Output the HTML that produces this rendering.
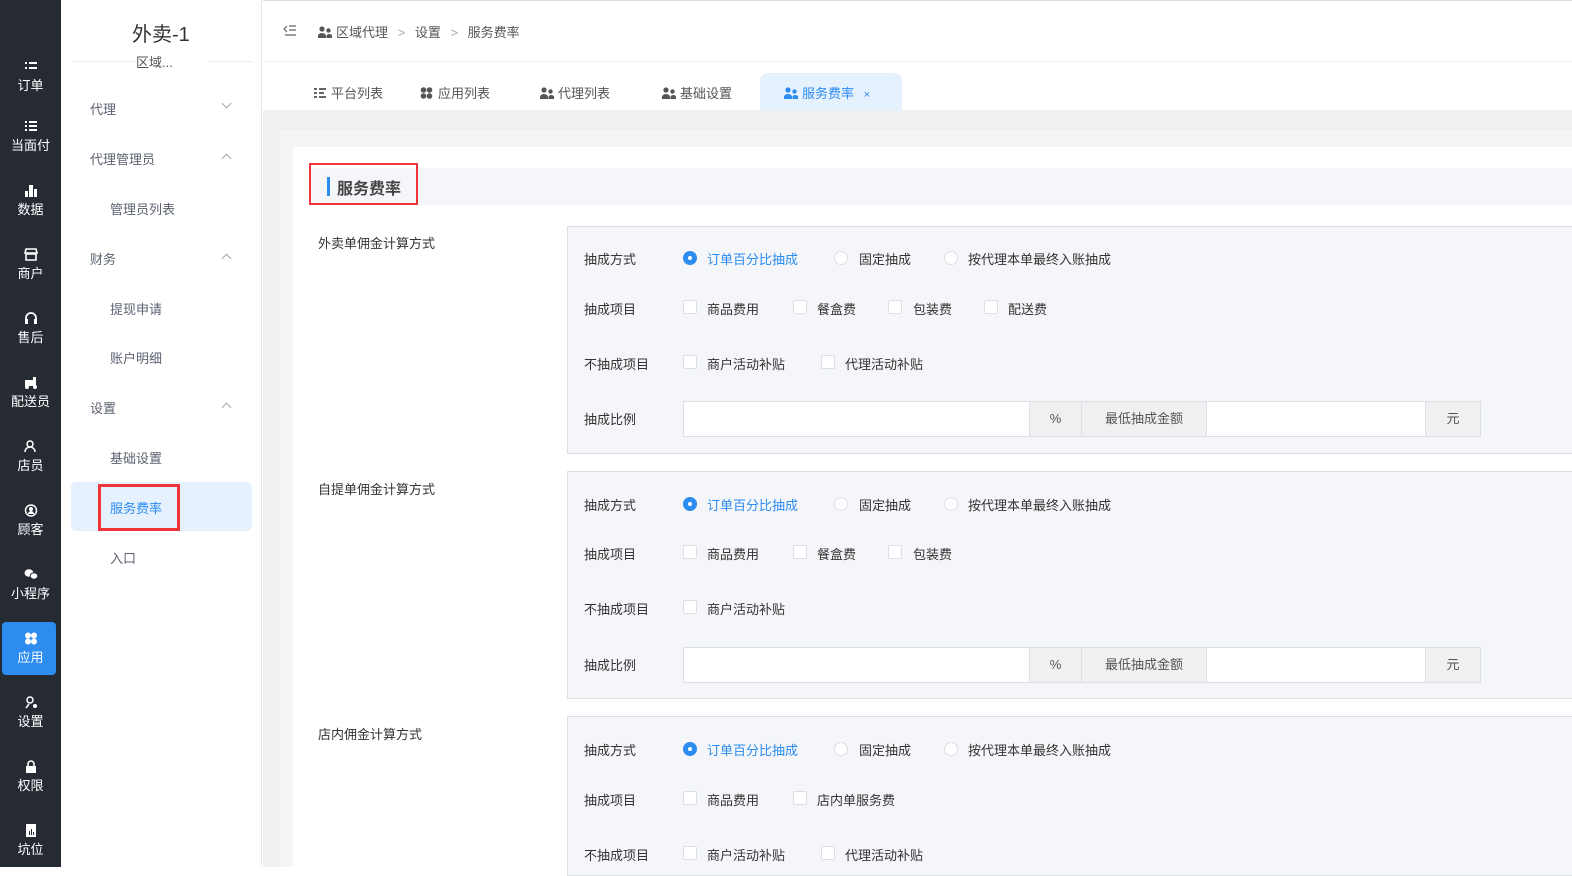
<!DOCTYPE html>
<html><head><meta charset="utf-8"><style>
*{margin:0;padding:0;box-sizing:border-box}
body{width:1572px;height:867px;overflow:hidden;position:relative;background:#fff;font-family:"Liberation Sans","Noto Sans CJK SC",sans-serif;font-size:13px;color:#333}
.a{position:absolute;white-space:nowrap}
.nav{position:absolute;left:0;top:0;width:61px;height:867px;background:#262a33}
.ni{position:absolute;left:0;width:61px;text-align:center;color:#fff;font-size:13px}
.ni .ic{display:block;margin:0 auto 2px;width:14px;height:13px}
.sub{position:absolute;left:61px;top:0;width:201px;height:867px;background:#fff;border-right:1px solid #e6e6e6}
.si{position:absolute;font-size:13px;color:#5c6270}
.chev{position:absolute;left:222px;width:7px;height:7px;border-left:1px solid #a0a4ad;border-top:1px solid #a0a4ad}
.panel{position:absolute;left:567px;width:1010px;background:#f5f6f9;border:1px solid #dcdfe6}
.radio{position:absolute;width:14px;height:14px;border-radius:50%;border:1px solid #dcdfe6;background:#fff}
.radio.on{background:#2d8cf0;border-color:#2d8cf0}
.radio.on::after{content:"";position:absolute;left:4px;top:4px;width:4px;height:4px;border-radius:50%;background:#fff}
.cb{position:absolute;width:14px;height:14px;border:1px solid #dcdfe6;background:#fff;border-radius:2px}
.lbl{position:absolute;font-size:13px;color:#333;white-space:nowrap}
.inp{position:absolute;height:36px;border:1px solid #dcdfe6;background:#fff}
.add{position:absolute;height:36px;background:#f0f0f0;border:1px solid #dcdfe6;font-size:13px;color:#555;text-align:center;line-height:34px}
.pp{display:inline-block;width:14px;height:12px;vertical-align:-1px;margin-right:4px}
</style></head><body>
<svg width="0" height="0" style="position:absolute"><defs><symbol id="pp" viewBox="0 0 14 12"><circle cx="4" cy="3" r="2.6"/><path d="M0 12v-2a4 3 0 0 1 8 0v2z"/><circle cx="10.5" cy="4.5" r="2.2"/><path d="M8.5 12v-2.5a3 2.5 0 0 1 5.5 0V12z"/></symbol></defs></svg>

<div class="nav">
<div class="ni" style="top:60px"><svg class="ic" viewBox="0 0 14 13"><rect x="1" y="2" width="2" height="2" fill="#fff"/><rect x="5" y="2" width="8" height="2" fill="#fff"/><rect x="1" y="7" width="2" height="2" fill="#fff"/><rect x="5" y="7" width="8" height="2" fill="#fff"/></svg>订单</div>
<div class="ni" style="top:120px"><svg class="ic" viewBox="0 0 14 13"><rect x="1" y="1" width="2" height="2" fill="#fff"/><rect x="5" y="1" width="8" height="2" fill="#fff"/><rect x="1" y="5" width="2" height="2" fill="#fff"/><rect x="5" y="5" width="8" height="2" fill="#fff"/><rect x="1" y="9" width="2" height="2" fill="#fff"/><rect x="5" y="9" width="8" height="2" fill="#fff"/></svg>当面付</div>
<div class="ni" style="top:184px"><svg class="ic" viewBox="0 0 14 13"><rect x="1" y="7" width="3" height="6" fill="#fff"/><rect x="5" y="1" width="4" height="12" fill="#fff"/><rect x="10" y="5" width="3" height="8" fill="#fff"/></svg>数据</div>
<div class="ni" style="top:248px"><svg class="ic" viewBox="0 0 14 13"><path d="M2 1h10l1 4H1z M2 6h10v6H2z" fill="none" stroke="#fff" stroke-width="1.6"/></svg>商户</div>
<div class="ni" style="top:312px"><svg class="ic" viewBox="0 0 14 13"><path d="M2 9V6a5 5 0 0 1 10 0v3" fill="none" stroke="#fff" stroke-width="1.8"/><rect x="1" y="7" width="3" height="5" fill="#fff"/><rect x="10" y="7" width="3" height="5" fill="#fff"/></svg>售后</div>
<div class="ni" style="top:376px"><svg class="ic" viewBox="0 0 14 13"><rect x="1" y="4" width="8" height="6" fill="#fff"/><rect x="9" y="1" width="3" height="9" fill="#fff"/><circle cx="3" cy="11" r="2" fill="#fff"/><circle cx="11" cy="11" r="2" fill="#fff"/></svg>配送员</div>
<div class="ni" style="top:440px"><svg class="ic" viewBox="0 0 14 13"><circle cx="6" cy="4" r="3" fill="none" stroke="#fff" stroke-width="1.5"/><path d="M1 12a5 5 0 0 1 10 0" fill="none" stroke="#fff" stroke-width="1.5"/></svg>店员</div>
<div class="ni" style="top:504px"><svg class="ic" viewBox="0 0 14 13"><circle cx="7" cy="6.5" r="5.5" fill="none" stroke="#fff" stroke-width="1.5"/><circle cx="7" cy="5" r="2" fill="#fff"/><path d="M4 10a3 3 0 0 1 6 0" fill="#fff"/></svg>顾客</div>
<div class="ni" style="top:568px"><svg class="ic" viewBox="0 0 14 13"><ellipse cx="5" cy="5" rx="4.5" ry="3.8" fill="#fff"/><ellipse cx="10" cy="8" rx="3.8" ry="3.2" fill="#fff" stroke="#262a33"/></svg>小程序</div>
<div style="position:absolute;left:2px;top:622px;width:54px;height:53px;background:#2d8cf0;border-radius:4px"></div>
<div class="ni" style="top:632px"><svg class="ic" viewBox="0 0 14 13"><circle cx="4" cy="3.5" r="3" fill="#fff"/><circle cx="10" cy="3.5" r="3" fill="#fff"/><circle cx="4" cy="9.5" r="3" fill="#fff"/><circle cx="10" cy="9.5" r="3" fill="#fff"/></svg>应用</div>
<div class="ni" style="top:696px"><svg class="ic" viewBox="0 0 14 13"><circle cx="6" cy="4" r="3" fill="none" stroke="#fff" stroke-width="1.5"/><path d="M2 12l3-4" stroke="#fff" stroke-width="1.5"/><circle cx="11" cy="10" r="2" fill="#fff"/></svg>设置</div>
<div class="ni" style="top:760px"><svg class="ic" viewBox="0 0 14 13"><path d="M4 6V4a3 3 0 0 1 6 0v2" fill="none" stroke="#fff" stroke-width="1.6"/><rect x="2" y="6" width="10" height="7" fill="#fff"/></svg>权限</div>
<div class="ni" style="top:824px"><svg class="ic" viewBox="0 0 14 13"><rect x="2" y="0" width="10" height="13" fill="#fff"/><rect x="5" y="7" width="1" height="4" fill="#262a33"/><rect x="7" y="5" width="1" height="6" fill="#262a33"/><rect x="9" y="8" width="1" height="3" fill="#262a33"/></svg>坑位</div>
</div>

<div class="sub">
<div class="a" style="left:71px;top:18px;font-size:20px;color:#333">外卖-1</div>
<div class="a" style="left:10px;top:61px;width:71px;height:1px;background:#eee"></div>
<div class="a" style="left:146px;top:61px;width:46px;height:1px;background:#eee"></div>
<div class="a" style="left:75px;top:52px;font-size:13px;color:#555">区域...</div>
<div class="si" style="left:29px;top:99px">代理</div><div class="chev" style="top:100px;left:162px;transform:rotate(-135deg)"></div>
<div class="si" style="left:29px;top:149px">代理管理员</div><div class="chev" style="top:155px;left:162px;transform:rotate(45deg)"></div>
<div class="si" style="left:49px;top:199px">管理员列表</div>
<div class="si" style="left:29px;top:249px">财务</div><div class="chev" style="top:255px;left:162px;transform:rotate(45deg)"></div>
<div class="si" style="left:49px;top:299px">提现申请</div>
<div class="si" style="left:49px;top:348px">账户明细</div>
<div class="si" style="left:29px;top:398px">设置</div><div class="chev" style="top:404px;left:162px;transform:rotate(45deg)"></div>
<div class="si" style="left:49px;top:448px">基础设置</div>
<div class="a" style="left:10px;top:482px;width:181px;height:49px;background:#e6f1fe;border-radius:5px"></div>
<div class="a" style="left:37px;top:484px;width:82px;height:47px;border:3px solid #f0353a"></div>
<div class="si" style="left:49px;top:498px;color:#2d8cf0">服务费率</div>
<div class="si" style="left:49px;top:548px">入口</div>
</div>

<div class="a" style="left:263px;top:0;width:1309px;height:1px;background:#ddd"></div>
<div class="a" style="left:263px;top:61px;width:1309px;height:1px;background:#f0f0f0"></div>
<svg class="a" style="left:283px;top:25px" width="14" height="11" viewBox="0 0 14 11"><path d="M4 1L1 4l3 3" fill="none" stroke="#666" stroke-width="1.2"/><path d="M6 1h7M6 5h7M2 10h11" stroke="#666" stroke-width="1.2"/></svg>
<div class="a" style="left:318px;top:22px;font-size:13px;color:#555"><svg class="pp" style="fill:#555"><use href="#pp"/></svg>区域代理 <span style="color:#aaa;margin:0 6px">&gt;</span> 设置 <span style="color:#aaa;margin:0 6px">&gt;</span> 服务费率</div>

<div class="a" style="left:263px;top:110px;width:1309px;height:757px;background:#f0f0f0"></div>
<div class="a" style="left:760px;top:73px;width:142px;height:38px;background:#e6f1fe;border-radius:8px 8px 0 0"></div>
<div class="a" style="left:313px;top:83px;color:#555"><svg class="pp" viewBox="0 0 14 12" style="fill:#666"><rect x="1" y="1" width="3" height="2"/><rect x="6" y="1" width="7" height="2"/><rect x="1" y="5" width="3" height="2"/><rect x="6" y="5" width="5" height="2"/><rect x="1" y="9" width="3" height="2"/><rect x="6" y="9" width="7" height="2"/></svg>平台列表</div>
<div class="a" style="left:420px;top:83px;color:#555"><svg class="pp" viewBox="0 0 14 12" style="fill:#555"><circle cx="3.5" cy="3" r="2.8"/><circle cx="9.5" cy="3" r="2.8"/><circle cx="3.5" cy="9" r="2.8"/><circle cx="9.5" cy="9" r="2.8"/></svg>应用列表</div>
<div class="a" style="left:540px;top:83px;color:#555"><svg class="pp" style="fill:#555"><use href="#pp"/></svg>代理列表</div>
<div class="a" style="left:662px;top:83px;color:#555"><svg class="pp" style="fill:#555"><use href="#pp"/></svg>基础设置</div>
<div class="a" style="left:784px;top:83px;color:#2d8cf0"><svg class="pp" style="fill:#2d8cf0"><use href="#pp"/></svg>服务费率 <span style="font-size:11px;margin-left:6px">×</span></div>

<div class="a" style="left:280px;top:130px;width:1292px;height:737px;background:#f4f5f7"></div>
<div class="a" style="left:293px;top:147px;width:1279px;height:720px;background:#fff"></div>
<div class="a" style="left:310px;top:168px;width:1262px;height:37px;background:#f5f6f9"></div>
<div class="a" style="left:327px;top:177px;width:3px;height:19px;background:#2d8cf0"></div>
<div class="a" style="left:337px;top:175px;font-size:16px;color:#444;font-weight:bold">服务费率</div>
<div class="a" style="left:309px;top:163px;width:109px;height:42px;border:2px solid #f0353a"></div>

<div class="a" style="left:318px;top:233px">外卖单佣金计算方式</div>
<div class="a" style="left:318px;top:479px">自提单佣金计算方式</div>
<div class="a" style="left:318px;top:724px">店内佣金计算方式</div>

<div class="panel" style="top:226px;height:228px"></div>
<div class="panel" style="top:471px;height:228px"></div>
<div class="panel" style="top:716px;height:160px"></div>

<div class="lbl" style="left:584px;top:249px">抽成方式</div>
<div class="radio on" style="left:683px;top:251px"></div><div class="lbl" style="left:707px;top:249px;color:#2d8cf0">订单百分比抽成</div>
<div class="radio" style="left:834px;top:251px"></div><div class="lbl" style="left:859px;top:249px">固定抽成</div>
<div class="radio" style="left:944px;top:251px"></div><div class="lbl" style="left:968px;top:249px">按代理本单最终入账抽成</div>
<div class="lbl" style="left:584px;top:299px">抽成项目</div>
<div class="cb" style="left:683px;top:300px"></div><div class="lbl" style="left:707px;top:299px">商品费用</div>
<div class="cb" style="left:793px;top:300px"></div><div class="lbl" style="left:817px;top:299px">餐盒费</div>
<div class="cb" style="left:888px;top:300px"></div><div class="lbl" style="left:913px;top:299px">包装费</div>
<div class="cb" style="left:984px;top:300px"></div><div class="lbl" style="left:1008px;top:299px">配送费</div>
<div class="lbl" style="left:584px;top:354px">不抽成项目</div>
<div class="cb" style="left:683px;top:355px"></div><div class="lbl" style="left:707px;top:354px">商户活动补贴</div>
<div class="cb" style="left:821px;top:355px"></div><div class="lbl" style="left:845px;top:354px">代理活动补贴</div>
<div class="lbl" style="left:584px;top:409px">抽成比例</div>
<div class="inp" style="left:683px;top:401px;width:347px"></div>
<div class="add" style="left:1029px;top:401px;width:53px">%</div>
<div class="add" style="left:1081px;top:401px;width:126px">最低抽成金额</div>
<div class="inp" style="left:1206px;top:401px;width:220px"></div>
<div class="add" style="left:1425px;top:401px;width:56px">元</div>

<div class="lbl" style="left:584px;top:495px">抽成方式</div>
<div class="radio on" style="left:683px;top:497px"></div><div class="lbl" style="left:707px;top:495px;color:#2d8cf0">订单百分比抽成</div>
<div class="radio" style="left:834px;top:497px"></div><div class="lbl" style="left:859px;top:495px">固定抽成</div>
<div class="radio" style="left:944px;top:497px"></div><div class="lbl" style="left:968px;top:495px">按代理本单最终入账抽成</div>
<div class="lbl" style="left:584px;top:544px">抽成项目</div>
<div class="cb" style="left:683px;top:545px"></div><div class="lbl" style="left:707px;top:544px">商品费用</div>
<div class="cb" style="left:793px;top:545px"></div><div class="lbl" style="left:817px;top:544px">餐盒费</div>
<div class="cb" style="left:888px;top:545px"></div><div class="lbl" style="left:913px;top:544px">包装费</div>
<div class="lbl" style="left:584px;top:599px">不抽成项目</div>
<div class="cb" style="left:683px;top:600px"></div><div class="lbl" style="left:707px;top:599px">商户活动补贴</div>
<div class="lbl" style="left:584px;top:655px">抽成比例</div>
<div class="inp" style="left:683px;top:647px;width:347px"></div>
<div class="add" style="left:1029px;top:647px;width:53px">%</div>
<div class="add" style="left:1081px;top:647px;width:126px">最低抽成金额</div>
<div class="inp" style="left:1206px;top:647px;width:220px"></div>
<div class="add" style="left:1425px;top:647px;width:56px">元</div>

<div class="lbl" style="left:584px;top:740px">抽成方式</div>
<div class="radio on" style="left:683px;top:742px"></div><div class="lbl" style="left:707px;top:740px;color:#2d8cf0">订单百分比抽成</div>
<div class="radio" style="left:834px;top:742px"></div><div class="lbl" style="left:859px;top:740px">固定抽成</div>
<div class="radio" style="left:944px;top:742px"></div><div class="lbl" style="left:968px;top:740px">按代理本单最终入账抽成</div>
<div class="lbl" style="left:584px;top:790px">抽成项目</div>
<div class="cb" style="left:683px;top:791px"></div><div class="lbl" style="left:707px;top:790px">商品费用</div>
<div class="cb" style="left:793px;top:791px"></div><div class="lbl" style="left:817px;top:790px">店内单服务费</div>
<div class="lbl" style="left:584px;top:845px">不抽成项目</div>
<div class="cb" style="left:683px;top:846px"></div><div class="lbl" style="left:707px;top:845px">商户活动补贴</div>
<div class="cb" style="left:821px;top:846px"></div><div class="lbl" style="left:845px;top:845px">代理活动补贴</div>
</body></html>
